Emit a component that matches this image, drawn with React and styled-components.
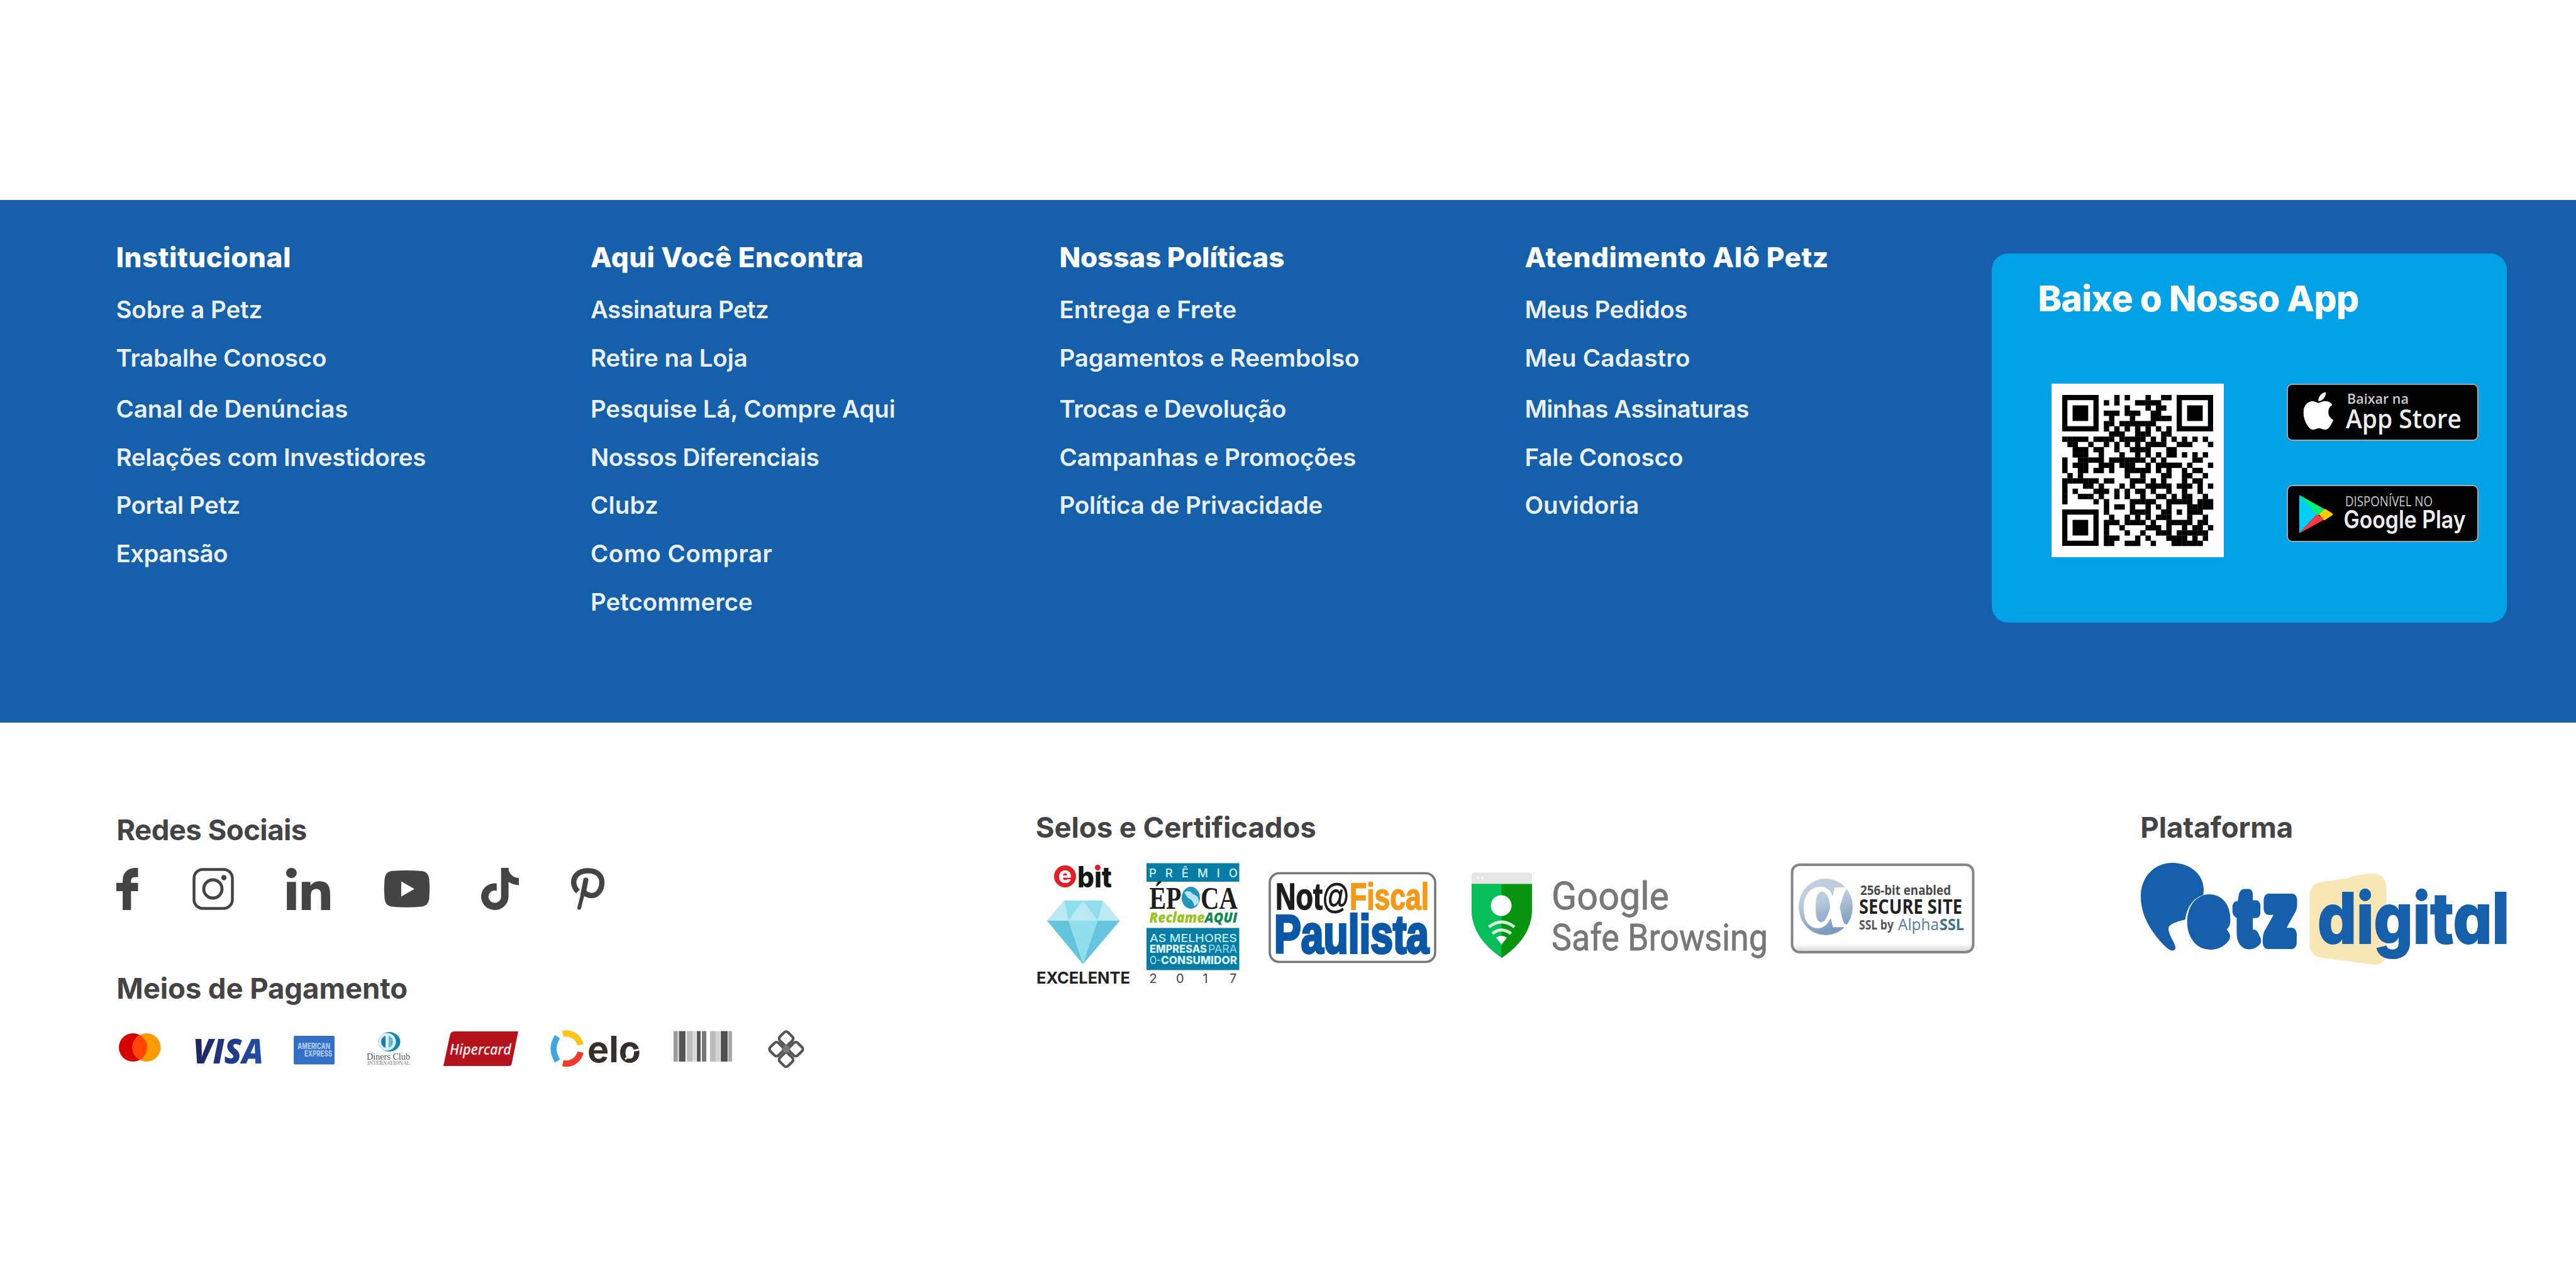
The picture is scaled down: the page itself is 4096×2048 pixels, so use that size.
import React, { useLayoutEffect, useRef, useState } from "react";
import styled, { createGlobalStyle } from "styled-components";

const GlobalStyle = createGlobalStyle`
  *, *::before, *::after { box-sizing: border-box; }
  html, body { margin: 0; padding: 0; background: #ffffff; }
  body { font-family: Inter, "Liberation Sans", sans-serif; }
  ul { list-style: none; margin: 0; padding: 0; }
  h2, h3 { margin: 0; }
`;

const BLUE = "#165fab";
const CYAN = "#00a1e6";
const INK = "#444444";

/* ---------- layout ---------- */

const Page = styled.footer`
  width: 4096px;
  height: 2048px;
  padding-top: 318px;
  background: #ffffff;
  overflow: hidden;
`;

const Band = styled.section`
  display: grid;
  grid-template-columns: 754.5px 745.5px 740px 743px 819px;
  height: 831px;
  padding-left: 184.4px;
  background: ${BLUE};
`;

const Column = styled.nav`
  padding-top: 61px;
`;

const ColumnTitle = styled.h2`
  margin-bottom: 15.4px;
  color: #ffffff;
  font-size: 44px;
  font-weight: 800;
  line-height: 60px;
  white-space: nowrap;
`;

const LinkItem = styled.li`
  color: #e9f0f9;
  font-size: 38.5px;
  font-weight: 600;
  line-height: 76.7px;
  white-space: nowrap;
  &:nth-child(3) { padding-top: 4px; }
`;

const AppCard = styled.aside`
  width: 819px;
  height: 587px;
  margin-top: 85px;
  padding: 32px 45px 0 73px;
  border-radius: 26px;
  background: ${CYAN};
`;

const AppTitle = styled.h2`
  color: #ffffff;
  font-size: 57px;
  font-weight: 800;
  line-height: 80px;
  white-space: nowrap;
`;

const AppBody = styled.div`
  display: flex;
  align-items: flex-start;
  justify-content: space-between;
  margin-top: 95px;
  padding-left: 22px;
`;

const QrFrame = styled.div`
  width: 274px;
  height: 276px;
  padding: 18px 17px;
  background: #ffffff;
`;

const Badges = styled.div`
  display: flex;
  flex-direction: column;
  gap: 70px;
`;

const Badge = styled.a`
  display: block;
  width: 305px;
  height: 91px;
  border: 2.5px solid #a6a6a6;
  border-radius: 9px;
  background: #000000;
`;

const Lower = styled.section`
  display: grid;
  grid-template-columns: 1461.5px 1756.5px 1fr;
  padding: 137px 0 0 185.3px;
`;

const Block = styled.div`
  padding-top: ${(p) => p.$top || 0}px;
`;

const BlockTitle = styled.h3`
  color: ${INK};
  font-size: 45.6px;
  font-weight: 700;
  line-height: 60px;
  white-space: nowrap;
`;

const ArtRow = styled.div`
  display: flex;
  align-items: flex-start;
  margin-top: ${(p) => p.$top}px;
`;

const Drawing = styled.svg`
  display: block;
  flex: none;
  width: ${(p) => p.$w}px;
  height: ${(p) => p.$h}px;
  margin-left: ${(p) => p.$gap || 0}px;
  overflow: visible;
`;

const Label = styled.text`
  font-family: ${(p) => p.$font || 'Inter, "Liberation Sans", sans-serif'};
  font-size: ${(p) => p.$size}px;
  font-weight: ${(p) => p.$weight || 400};
  font-style: ${(p) => (p.$italic ? "italic" : "normal")};
`;

const LogoWord = styled(Label)`
  font-feature-settings: "cv11" 1;
`;

/* ---------- helpers ---------- */

const Tracked = styled.span`
  display: inline-block;
  white-space: nowrap;
`;

/* Tracks a line of text out or in until it takes the given width. */
function Fit({ width, children }) {
  const ref = useRef(null);
  const [spacing, setSpacing] = useState(0);
  useLayoutEffect(() => {
    const natural = ref.current.getBoundingClientRect().width;
    setSpacing((width - natural) / (children.length - 1));
  }, [width, children]);
  return (
    <Tracked ref={ref} style={{ letterSpacing: spacing }}>
      {children}
    </Tracked>
  );
}

function Art({ w, h, gap, box, stretch, children, label }) {
  return (
    <Drawing
      $w={w}
      $h={h}
      $gap={gap}
      viewBox={box || `0 0 ${w} ${h}`}
      preserveAspectRatio={stretch ? "none" : "xMidYMid meet"}
      aria-label={label}
    >
      {children}
    </Drawing>
  );
}

function T({ x, y, w, size, children, as: Comp = Label, ...rest }) {
  return (
    <Comp x={x} y={y} $size={size} textLength={w} lengthAdjust="spacingAndGlyphs" {...rest}>
      {children}
    </Comp>
  );
}

/* ---------- data ---------- */

const COLUMNS = [
  {
    title: ["Institucional", 278],
    links: [
      ["Sobre a Petz", 233],
      ["Trabalhe Conosco", 335],
      ["Canal de Denúncias", 369],
      ["Relações com Investidores", 493],
      ["Portal Petz", 198],
      ["Expansão", 178],
    ],
  },
  {
    title: ["Aqui Você Encontra", 434],
    links: [
      ["Assinatura Petz", 284],
      ["Retire na Loja", 250],
      ["Pesquise Lá, Compre Aqui", 485],
      ["Nossos Diferenciais", 364],
      ["Clubz", 108],
      ["Como Comprar", 289],
      ["Petcommerce", 258],
    ],
  },
  {
    title: ["Nossas Políticas", 358],
    links: [
      ["Entrega e Frete", 282],
      ["Pagamentos e Reembolso", 477],
      ["Trocas e Devolução", 361],
      ["Campanhas e Promoções", 472],
      ["Política de Privacidade", 419],
    ],
  },
  {
    title: ["Atendimento Alô Petz", 483],
    links: [
      ["Meus Pedidos", 259],
      ["Meu Cadastro", 263],
      ["Minhas Assinaturas", 357],
      ["Fale Conosco", 252],
      ["Ouvidoria", 182],
    ],
  },
];

/* Dark modules of each row, without the three finder squares. */
const QR_ROWS = [
  [10, 12, 16, 19, 20],
  [8, 10, 14, 15, 16, 17, 18],
  [12, 16, 18, 19],
  [8, 9, 10, 12, 13, 14, 17, 18],
  [9, 13, 17, 18, 19, 20],
  [8, 9, 11, 12, 13, 14, 15, 16, 17],
  [8, 10, 12, 14, 16, 18, 20],
  [9, 10, 11, 14, 15, 16, 19, 20],
  [0, 1, 2, 3, 4, 6, 7, 8, 9, 11, 12, 13, 14, 15, 17, 19, 21, 23, 25, 27],
  [1, 2, 5, 8, 10, 12, 14, 16, 17, 18, 19, 22, 23, 24, 28],
  [2, 3, 4, 6, 7, 10, 13, 14, 15, 16, 20, 21],
  [2, 3, 4, 7, 11, 14, 16, 18, 20, 21, 23, 25, 27],
  [0, 3, 4, 5, 6, 7, 9, 10, 11, 12, 13, 14, 15, 17, 19, 25, 26],
  [0, 2, 3, 4, 7, 8, 9, 11, 12, 13, 16, 18, 19, 20, 21, 22, 24, 28],
  [0, 3, 4, 6, 7, 9, 12, 13, 14, 15, 16, 18, 20, 23, 25, 26],
  [1, 3, 12, 15, 19, 20, 23, 24, 27],
  [0, 1, 2, 3, 4, 5, 6, 8, 9, 13, 14, 15, 17, 19, 23, 25, 26],
  [0, 4, 5, 7, 11, 13, 16, 17, 18, 19, 20, 22, 23, 24, 26, 28],
  [0, 2, 6, 7, 8, 10, 12, 14, 15, 17, 20, 23, 26],
  [0, 3, 4, 5, 7, 10, 12, 15, 18, 19, 21, 23, 24, 27],
  [0, 6, 8, 13, 14, 15, 16, 17, 20, 21, 22, 23, 24, 26, 27, 28],
  [8, 10, 11, 13, 16, 18, 20, 24, 25, 26, 27, 28],
  [8, 13, 14, 15, 16, 19, 20, 22, 24, 25, 26],
  [9, 12, 14, 16, 18, 19, 20, 24, 27],
  [8, 9, 10, 12, 13, 14, 15, 17, 20, 21, 22, 23, 24, 26, 27],
  [8, 11, 16, 17, 18, 20, 23, 25, 26, 28],
  [8, 12, 15, 18, 19, 20, 22, 23, 24, 25, 26, 27],
  [8, 9, 10, 14, 16, 20, 21, 22, 23, 25, 27],
  [8, 9, 12, 13, 14, 17, 21, 22, 23, 24, 25, 26],
];

function QrCode() {
  return (
    <Art w={240} h={240} box="0 0 29 29" label="QR code">
      {QR_ROWS.map((row, y) =>
        row.map((x) => <rect key={`${x}-${y}`} x={x} y={y} width="1.03" height="1.03" fill="#000" />)
      )}
      {[[0, 0], [22, 0], [0, 22]].map(([x, y]) => (
        <g key={`${x}-${y}`}>
          <rect x={x + 0.5} y={y + 0.5} width="6" height="6" fill="none" stroke="#000" />
          <rect x={x + 2} y={y + 2} width="3" height="3" fill="#000" />
        </g>
      ))}
    </Art>
  );
}

const HUMANIST = '"Open Sans", "Noto Sans", sans-serif';

function AppStoreArt() {
  return (
    <Art w={300} h={86} label="App Store">
      <svg x="24.5" y="11.5" width="47.5" height="60" viewBox="4 32 376 448" preserveAspectRatio="none">
        <path
          fill="#fff"
          d="M318.7 268.7c-.2-36.7 16.4-64.4 50-84.8-18.8-26.9-47.2-41.7-84.7-44.6-35.5-2.8-74.3 20.7-88.5 20.7-15 0-49.4-19.7-76.4-19.7C63.3 141.2 4 184.8 4 273.5q0 39.3 14.4 81.2c12.8 36.7 59 126.7 107.2 125.2 25.2-.6 43-17.9 75.8-17.9 31.8 0 48.3 17.9 76.4 17.9 48.6-.7 90.4-82.5 102.6-119.3-65.2-30.7-61.7-90-61.7-91.9zm-56.6-164.2c27.3-32.4 24.8-61.9 24-72.5-24.1 1.4-52 16.4-67.9 34.9-17.5 19.8-27.8 44.3-25.6 71.9 26.1 2 49.9-11.4 69.5-34.3z"
        />
      </svg>
      <T x={94} y={30} w={98} size={22} $weight={600} fill="#cdcdcd" $font={HUMANIST}>Baixar na</T>
      <T x={92} y={69} w={184} size={42} $weight={600} fill="#ededed" $font={HUMANIST}>App Store</T>
    </Art>
  );
}

function GooglePlayArt() {
  return (
    <Art w={300} h={86} label="Google Play">
      <path d="M18 14V75L46 45Z" fill="#00ceff" />
      <path d="M18 14L59 37L47 47Z" fill="#00ef76" />
      <path d="M18 75L46 45L58 53Z" fill="#ff3a44" />
      <path d="M59 36L71 43.5Q72 44.5 71 46L58 54.5L49 45Z" fill="#ffc900" />
      <T x={91} y={31.5} w={139} size={22} $weight={500} fill="#cdcdcd" $font={HUMANIST}>DISPONÍVEL NO</T>
      <T x={88.5} y={66.5} w={194} size={39} $weight={600} fill="#ededed">Google Play</T>
    </Art>
  );
}

/* ---------- social icons ---------- */

function SocialIcons() {
  return (
    <ArtRow $top={29.5}>
      <Art w={34.5} h={67} box="38 505 65 338" stretch label="Facebook">
        <path
          fill={INK}
          d="M57 843V692H38V625H57V605C57 540 74 505 96 505H103V580H97C85 580 82 590 82 612V625H103V692H82V843Z"
        />
      </Art>
      <Art w={66} h={67} gap={86} label="Instagram">
        <rect x="2.5" y="2.5" width="61" height="62" rx="14" fill="none" stroke={INK} strokeWidth="4.5" />
        <circle cx="32.5" cy="33.5" r="14.5" fill="none" stroke={INK} strokeWidth="4.8" />
        <circle cx="50" cy="15.5" r="4.2" fill={INK} />
      </Art>
      <Art w={70} h={67} gap={83} box="0 0 448 448" stretch label="LinkedIn">
        <path
          fill={INK}
          d="M100.28 448H7.4V148.9h92.88zM53.79 108.1C24.09 108.1 0 83.5 0 53.8a53.79 53.79 0 0 1 107.58 0c0 29.7-24.1 54.3-53.79 54.3zM447.9 448h-92.68V302.4c0-34.7-.7-79.2-48.29-79.2-48.29 0-55.69 37.7-55.69 76.7V448h-92.78V148.9h89.08v40.8h1.3c12.4-23.5 42.69-48.3 87.88-48.3 94 0 111.28 61.9 111.28 142.3V448z"
        />
      </Art>
      <Art w={74} h={67} gap={85} label="YouTube">
        <path
          fill={INK}
          d="M12 5Q36 3 61 5Q71 6 72.5 18Q74 33 72.5 49Q71 60 61 61.5Q36 64 12 61.5Q3 60 1.5 49Q0 33 1.5 18Q3 6 12 5Z"
        />
        <path fill="#fff" d="M28 21.5V45.5L49 33.5Z" />
      </Art>
      <Art w={60} h={67} gap={81.5} box="0 0 448 512" stretch label="TikTok">
        <path
          fill={INK}
          d="M448,209.91a210.06,210.06,0,0,1-122.77-39.25V349.38A162.55,162.55,0,1,1,185,188.31V278.2a74.62,74.62,0,1,0,52.23,71.18V0l88,0a121.18,121.18,0,0,0,1.86,22.17h0A122.18,122.18,0,0,0,381,102.39a121.43,121.43,0,0,0,67,20.14Z"
        />
      </Art>
      <Art w={55} h={67} gap={82} label="Pinterest">
        <g fill="none" stroke={INK} strokeLinecap="round">
          <path strokeWidth="8.5" strokeLinecap="butt" d="M12 37.5C-1 25 5 4.5 28 4.5C42 4.5 50 12 50 23C50 35 43 44 34 44C28 44 24 42 21 37" />
          <path strokeWidth="8" d="M24.5 19.5L20 42" />
          <path strokeWidth="6" d="M20.5 38L14 63.5" />
        </g>
      </Art>
    </ArtRow>
  );
}

/* ---------- payment marks ---------- */

const BARS = [
  [0, 6, "#9b9b9b"], [6, 3, "#c9c9c9"], [9, 10, "#555"], [21, 9, "#bdbdbd"], [30, 6, "#d9d9d9"],
  [37, 6, "#555"], [45, 7, "#777"], [58, 9, "#bdbdbd"], [67, 7, "#d4d4d4"], [75, 11, "#505050"], [87, 6, "#a8a8a8"],
];

function PaymentMarks() {
  return (
    <ArtRow $top={35}>
      <Art w={67} h={63} gap={3.5} label="Mastercard">
        <circle cx="22.5" cy="28.5" r="22.5" fill="#d60000" />
        <circle cx="44" cy="28.5" r="22.5" fill="#ff9a00" />
        <path d="M33.25 8.7A22.5 22.5 0 0 1 33.25 48.3A22.5 22.5 0 0 1 33.25 8.7Z" fill="#ff4500" />
      </Art>
      <Art w={112} h={63} gap={50} label="Visa">
        <defs>
          <linearGradient id="visa" x1="0" x2="1">
            <stop offset="0" stopColor="#20225a" />
            <stop offset="1" stopColor="#2252a8" />
          </linearGradient>
        </defs>
        <T x={1} y={54} w={112} size={54} $weight={800} $italic fill="url(#visa)" $font={HUMANIST}>VISA</T>
      </Art>
      <Art w={65} h={63} gap={49.5} label="American Express">
        <rect x="0" y="10" width="65" height="45.5" rx="2" fill="#3370c4" />
        <T x={6} y={31} w={52} size={12.5} $weight={800} fill="#a9c8f2">AMERICAN</T>
        <T x={17} y={42.5} w={44} size={12.5} $weight={800} fill="#a9c8f2">EXPRESS</T>
      </Art>
      <Art w={70} h={63} gap={51} label="Diners Club">
        <ellipse cx="36" cy="19.5" rx="17.5" ry="15.5" fill="#1782b3" />
        <circle cx="32.5" cy="19.5" r="14" fill="#d5f2fb" />
        <path d="M30 10A10 10 0 0 0 30 29Z" fill="#1b7fa8" />
        <path d="M35 10A10 10 0 0 1 35 29Z" fill="#6fb4cd" />
        <T x={0} y={47.5} w={69} size={15} fill="#555" $font={'"Liberation Serif", serif'}>Diners Club</T>
        <T x={1} y={56} w={68} size={7.5} fill="#777" $font={'"Liberation Serif", serif'}>INTERNATIONAL</T>
      </Art>
      <Art w={119} h={63} gap={52} label="Hipercard">
        <path d="M17 3H119L108.5 55Q107.5 58 104 58H0L10.5 9Q12 3 17 3Z" fill="#b3131d" />
        <T x={10} y={40} w={98} size={24} $weight={600} $italic fill="#ffe9ea" $font={HUMANIST}>Hipercard</T>
      </Art>
      <Art w={142} h={63} gap={50.5} label="Elo">
        <g fill="none" strokeWidth="10">
          <path d="M11.5 11.5Q-1 30 11.5 50" stroke="#41a6dd" strokeWidth="9.5" />
          <path d="M20 7A23 23 0 0 1 48 24.5" stroke="#f9c51c" />
          <path d="M20 53.5A23 23 0 0 0 48 36" stroke="#ee3b2b" />
        </g>
        <T x={59} y={51.5} w={85} size={58} $weight={700} fill="#352f2e">elo</T>
        <path d="M128 34.5L146 31" stroke="#fff" strokeWidth="3" />
        <path d="M119 47L127 41" stroke="#fff" strokeWidth="3" />
      </Art>
      <Art w={94} h={63} gap={54.5} label="Boleto">
        {BARS.map(([x, w, c]) => <rect key={x} x={x} y="2.5" width={w} height="48.5" fill={c} />)}
      </Art>
      <Art w={58} h={63} gap={56} label="Pix">
        <g fill="none" stroke="#555" strokeWidth="4.2" strokeLinejoin="round">
          {[[29, 14.5], [29, 48], [13.7, 31.25], [44.3, 31.25]].map(([cx, cy]) => (
            <rect key={`${cx}-${cy}`} x={cx - 9.2} y={cy - 9.2} width="18.4" height="18.4" rx="4.5" transform={`rotate(45 ${cx} ${cy})`} />
          ))}
        </g>
        <path d="M29 24L36 31.25L29 38.5L22 31.25Z" fill="#7a7a7a" />
      </Art>
    </ArtRow>
  );
}

/* ---------- seals ---------- */

function Seals() {
  return (
    <ArtRow $top={24}>
      <Art w={150} h={200} gap={1} label="ebit excelente">
        <circle cx="45.5" cy="23.5" r="17.5" fill="#e01f28" />
        <T x={35} y={33.5} w={21} size={36} $weight={800} fill="#fff">e</T>
        <T x={65} y={40.8} w={55} size={46} $weight={800} fill="#161616">bit</T>
        <rect x="91" y="4" width="14" height="10" fill="#fff" />
        <circle cx="97.5" cy="9.5" r="4.5" fill="#e01f28" />
        <path d="M17 94L44 62H105.5L132.5 94L74 163Z" fill="#8fdeed" />
        <path d="M17 94L44 62L51 94Z" fill="#bce9f2" />
        <path d="M132.500 94L105.500 62L97.500 94Z" fill="#bce9f2" />
        <path d="M51 94L74 62L97.500 94Z" fill="#b9e8f2" />
        <path d="M17 94H51L74 163Z" fill="#63c5da" />
        <path d="M132.500 94H97.500L74 163Z" fill="#66c4de" />
        <T x={0} y={193.8} w={149} size={25.5} $weight={700} fill="#222">EXCELENTE</T>
      </Art>
      <Art w={149} h={200} gap={25.5} label="Prêmio Época Reclame Aqui">
        <rect x="0" y="2.5" width="147.5" height="29.5" fill="#077ca4" />
        <Label x="4" y="25" $size={18.5} $weight={500} fill="#d4f1fa" textLength="141" lengthAdjust="spacing">PRÊMIO</Label>
        <T x={4.5} y={75} w={51} size={50} $weight={700} fill="#1d1d1d" $font={'"Liberation Serif", serif'}>ÉP</T>
        <ellipse cx="70.5" cy="57.5" rx="14.5" ry="17.5" fill="#2295b9" />
        <path d="M60 49Q68 44 74 52Q84 54 83 66L76 71Q74 60 66 58Z" fill="#b9e3ee" />
        <T x={86} y={75} w={59} size={50} $weight={700} fill="#1d1d1d" $font={'"Liberation Serif", serif'}>CA</T>
        <T x={4.5} y={97} w={88} size={22} $weight={800} $italic fill="#97c41f" $font={HUMANIST}>Reclame</T>
        <T x={92.5} y={97} w={52} size={22} $weight={800} $italic fill="#0f8a50" $font={HUMANIST}>AQUI</T>
        <rect x="0" y="105.5" width="147.5" height="67" fill="#077ca4" />
        <T x={5} y={127.5} w={139} size={17.5} $weight={500} fill="#bfeaf7">AS MELHORES</T>
        <T x={5} y={145} w={91} size={17.5} $weight={800} fill="#d8f5fd">EMPRESAS</T>
        <T x={98} y={145} w={46} size={17.5} fill="#9cd9ec">PARA</T>
        <T x={5} y={162.5} w={18} size={17.5} fill="#bfeaf7">O-</T>
        <T x={23} y={162.5} w={121} size={17.5} $weight={800} fill="#d8f5fd">CONSUMIDOR</T>
        {["2", "0", "1", "7"].map((d, i) => (
          <Label key={d} x={4.5 + i * 42.5} y="193" $size={20} fill="#444">{d}</Label>
        ))}
      </Art>
      <Art w={267} h={200} gap={44.5} label="Nota Fiscal Paulista">
        <rect x="2" y="18.5" width="263" height="141" rx="15" fill="#fff" stroke="#77787b" strokeWidth="3.6" />
        <T x={11} y={75.5} w={75} size={60} $weight={700} fill="#1d1d1f" stroke="#1d1d1f" strokeWidth="1.5" $font={'"Liberation Sans", sans-serif'}>Not</T>
        <T x={85} y={74} w={44} size={56} fill="#1d1d1f" stroke="#1d1d1f" $font={'"Liberation Sans", sans-serif'}>@</T>
        <T x={129} y={75.5} w={126} size={60} $weight={700} fill="#f39a17" stroke="#f39a17" strokeWidth="1.8" $font={'"Liberation Sans", sans-serif'}>Fiscal</T>
        <T x={9} y={145} w={246} size={85} $weight={700} fill="#0a58a5" stroke="#0a58a5" strokeWidth="4" $font={'"Liberation Sans", sans-serif'}>Paulista</T>
      </Art>
      <Art w={474} h={200} gap={55} label="Google Safe Browsing">
        <clipPath id="left-half"><rect x="0" y="35.5" width="48.5" height="130" /></clipPath>
        <path d="M1 35.5V23Q1 17.5 6 17.5H92Q97 17.5 97 23V35.5Z" fill="#e6e6e6" />
        <circle cx="11" cy="26" r="2" fill="#fff" />
        <circle cx="18" cy="26" r="2" fill="#fff" />
        <path d="M1 35.5H97V80Q95 122 49 153Q3 122 1 80Z" fill="#07950f" />
        <path clipPath="url(#left-half)" d="M1 35.5H97V80Q95 122 49 153Q3 122 1 80Z" fill="#06bf58" />
        <circle cx="48" cy="70" r="16.5" fill="#fff" />
        <g fill="none" stroke="#d8f5dc" strokeWidth="5">
          <path d="M28.5 104Q48.5 88 69 104" />
          <path d="M34 114.5Q48.5 103 63.5 114.5" />
        </g>
        <path d="M40 121Q48.5 115 57 121L48.500 132Z" fill="#fff" />
        <T x={128} y={75.8} w={187} size={62} fill="#767976" stroke="#767976" strokeWidth="0.8" $font={"Roboto, sans-serif"}>Google</T>
        <T x={128} y={141.3} w={344} size={59} fill="#767976" stroke="#767976" strokeWidth="0.8" $font={"Roboto, sans-serif"}>Safe Browsing</T>
      </Art>
      <Art w={294} h={200} gap={34.5} label="AlphaSSL secure site">
        <defs>
          <linearGradient id="sphere" x1="0" y1="0" x2="0.3" y2="1">
            <stop offset="0" stopColor="#c3d0e0" />
            <stop offset="0.45" stopColor="#bccbdc" />
            <stop offset="1" stopColor="#7b9cc0" />
          </linearGradient>
          <linearGradient id="plate" x1="0" y1="0" x2="0" y2="1">
            <stop offset="0.9" stopColor="#ffffff" />
            <stop offset="1" stopColor="#d6d2d2" />
          </linearGradient>
        </defs>
        <rect x="2.5" y="5" width="288" height="139" rx="12" fill="url(#plate)" stroke="#868686" strokeWidth="4" />
        <ellipse cx="56" cy="72" rx="43" ry="45" fill="url(#sphere)" />
        <T x={16} y={105} w={74} size={138} $weight={700} fill="#fff" $font={'"Liberation Serif", serif'}>α</T>
        <T x={111} y={52.5} w={144} size={22} $weight={700} fill="#4a4a4a" $font={HUMANIST}>256-bit enabled</T>
        <T x={109} y={83} w={164} size={33} $weight={700} fill="#222" $font={HUMANIST}>SECURE SITE</T>
        <T x={109} y={108} w={55} size={21} $weight={700} fill="#555" $font={HUMANIST}>SSL by</T>
        <T x={171} y={108.5} w={65} size={25} fill="#4f7c9f" $font={HUMANIST}>Alpha</T>
        <T x={237} y={108.5} w={39} size={25} $weight={700} fill="#44708f" $font={HUMANIST}>SSL</T>
      </Art>
    </ArtRow>
  );
}

function PetzDigital() {
  return (
    <ArtRow $top={24}>
      <Art w={583} h={170} gap={1} label="Petz digital">
        <path
          fill="#f9e6b5"
          d="M268.5 52Q270 36 285 33L327 27Q350 19 368 19Q390 19 390.5 45V148Q388 164 370 164Q330 158 282 152Q269 146 268.5 132Z"
        />
        <path
          fill={BLUE}
          d="M0 55C0 24 22 2 50 2C80 2 100 22 100 44C100 51 99 56 98 59C86 62 76 74 73 91C68 94 46 96 44 106C44 118 56 130 55 138C52 145 44 141 34 130C14 108 0 84 0 55Z"
        />
        <g fill={BLUE} stroke={BLUE} strokeLinejoin="round" strokeLinecap="round">
          <T x={16} y={84} w={54} size={88} $weight={900} strokeWidth="4" $font={"Lato, sans-serif"}>P</T>
          <ellipse cx="107" cy="97" rx="36.5" ry="45" fill="#fff" stroke="none" />
          <T x={79} y={129} w={58} size={128} $weight={900} strokeWidth="20" $font={"Lato, sans-serif"}>e</T>
          <T x={151} y={130} w={34} size={116} $weight={900} strokeWidth="17" $font={"Lato, sans-serif"}>t</T>
          <T x={199} y={129} w={45} size={132} $weight={900} strokeWidth="20" $font={"Lato, sans-serif"}>z</T>
        </g>
        <T as={LogoWord} x={281} y={129.5} w={305} size={111} $weight={800} fill={BLUE} stroke={BLUE} strokeWidth="2">digital</T>
      </Art>
    </ArtRow>
  );
}

/* ---------- page ---------- */

export default function App() {
  return (
    <>
      <GlobalStyle />
      <Page>
        <Band>
          {COLUMNS.map(({ title, links }) => (
            <Column key={title[0]}>
              <ColumnTitle><Fit width={title[1]}>{title[0]}</Fit></ColumnTitle>
              <ul>
                {links.map(([text, width]) => (
                  <LinkItem key={text}><Fit width={width}>{text}</Fit></LinkItem>
                ))}
              </ul>
            </Column>
          ))}
          <AppCard>
            <AppTitle><Fit width={511}>Baixe o Nosso App</Fit></AppTitle>
            <AppBody>
              <QrFrame><QrCode /></QrFrame>
              <Badges>
                <Badge><AppStoreArt /></Badge>
                <Badge><GooglePlayArt /></Badge>
              </Badges>
            </AppBody>
          </AppCard>
        </Band>
        <Lower>
          <Block $top={4}>
            <BlockTitle><Fit width={303}>Redes Sociais</Fit></BlockTitle>
            <SocialIcons />
            <Block $top={95.5}>
              <BlockTitle><Fit width={463}>Meios de Pagamento</Fit></BlockTitle>
              <PaymentMarks />
            </Block>
          </Block>
          <Block>
            <BlockTitle><Fit width={446}>Selos e Certificados</Fit></BlockTitle>
            <Seals />
          </Block>
          <Block>
            <BlockTitle><Fit width={243}>Plataforma</Fit></BlockTitle>
            <PetzDigital />
          </Block>
        </Lower>
      </Page>
    </>
  );
}
